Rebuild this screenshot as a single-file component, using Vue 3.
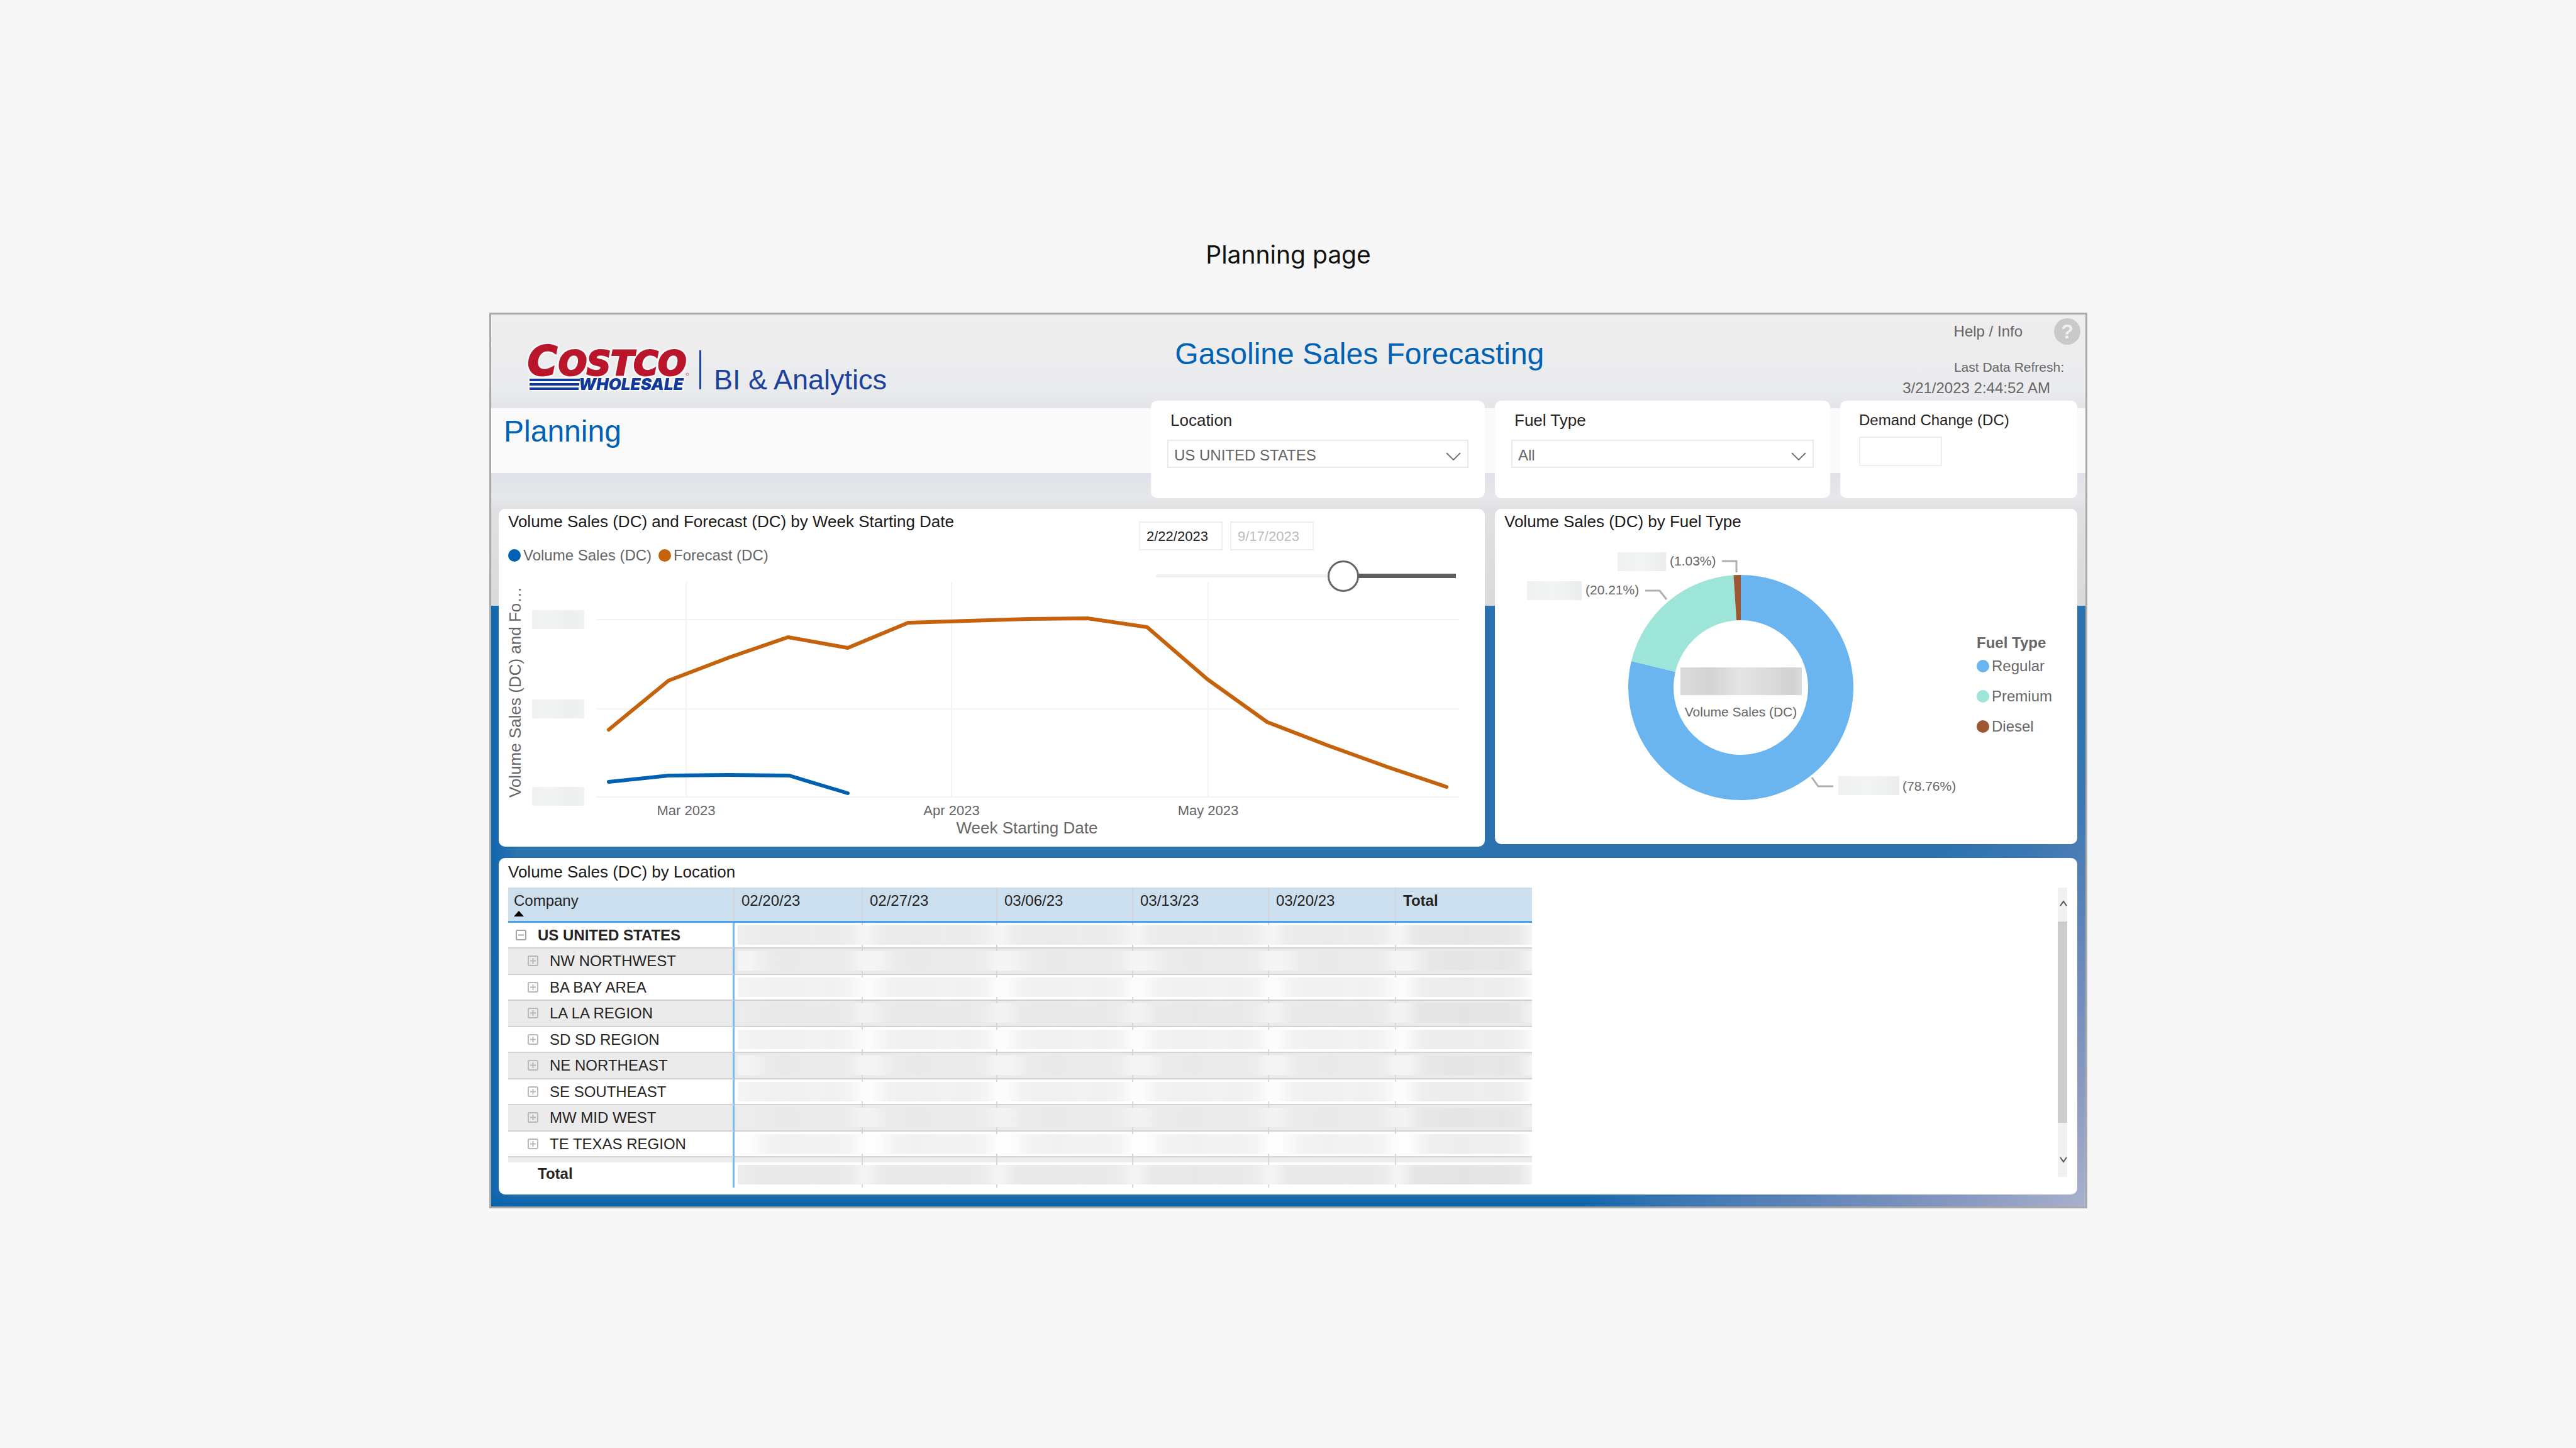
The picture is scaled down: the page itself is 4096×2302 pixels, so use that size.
<script setup>
import { ref } from 'vue'

const location = ref('US UNITED STATES')
const fuelType = ref('All')
const demandChange = ref('')
const startDate = ref('2/22/2023')
const endDate = ref('9/17/2023')
const rangeStart = ref(64)

const forecastPoints = [
  [175, 234], [270, 156], [367, 119], [460, 87], [555, 104], [651, 64],
  [843, 58], [936, 57], [1031, 71], [1127, 154], [1222, 222], [1318, 259],
  [1415, 294], [1507, 325],
]
const salesPoints = [[175, 317], [270, 307], [365, 306], [462, 307], [555, 335]]
const toPoints = (list) => list.map((p) => p.join(',')).join(' ')

const monthTicks = [
  { x: 298, label: 'Mar 2023' },
  { x: 720, label: 'Apr 2023' },
  { x: 1128, label: 'May 2023' },
]
const valueTicks = [59, 201, 341]
const maskedTicks = [44, 186, 325]

const fuels = [
  { name: 'Regular', share: 0.7876, color: '#6ab4f0' },
  { name: 'Premium', share: 0.2021, color: '#9de4d9' },
  { name: 'Diesel', share: 0.0103, color: '#9c5733' },
]
const cx = 391
const cy = 247
const outer = 179
const inner = 107
let turned = 0
const slices = fuels.map((fuel) => {
  const a = turned * 2 * Math.PI
  turned += fuel.share
  const b = turned * 2 * Math.PI
  const at = (r, t) => `${cx + r * Math.sin(t)} ${cy - r * Math.cos(t)}`
  const large = fuel.share > 0.5 ? 1 : 0
  return {
    ...fuel,
    d: `M${at(outer, a)}A${outer} ${outer} 0 ${large} 1 ${at(outer, b)}L${at(inner, b)}A${inner} ${inner} 0 ${large} 0 ${at(inner, a)}Z`,
  }
})
const shareLabels = [
  { text: '(1.03%)', x: 278, y: 53, box: [195, 32, 77], line: '361,46 384,46 384,64' },
  { text: '(20.21%)', x: 144, y: 99, box: [51, 78, 87], line: '239,93 262,93 273,107' },
  { text: '(78.76%)', x: 648, y: 411, box: [546, 388, 97], line: '504,390 514,404 538,404' },
]

const weeks = ['02/20/23', '02/27/23', '03/06/23', '03/13/23', '03/20/23']
const regions = [
  { name: 'US UNITED STATES', top: true, fade: 6, edge: 245, tone: 235 },
  { name: 'NW NORTHWEST', fade: 18, edge: 245, tone: 234 },
  { name: 'BA BAY AREA', fade: 12, edge: 251, tone: 241 },
  { name: 'LA LA REGION', fade: 10, edge: 243, tone: 233 },
  { name: 'SD SD REGION', fade: 12, edge: 251, tone: 241 },
  { name: 'NE NORTHEAST', fade: 16, edge: 245, tone: 234 },
  { name: 'SE SOUTHEAST', fade: 12, edge: 252, tone: 241 },
  { name: 'MW MID WEST', fade: 12, edge: 243, tone: 234 },
  { name: 'TE TEXAS REGION', fade: 18, edge: 253, tone: 242 },
]
const totals = { fade: 6, edge: 244, tone: 233 }

function masked(row, col) {
  const g = (v) => `rgb(${v},${v},${v})`
  const body = row.tone - (col === 6 ? 4 : 0)
  const start = col === 1 && row.fade < 15 ? g(body + 3) : g(row.edge)
  return {
    backgroundImage: `linear-gradient(90deg, ${start} ${row.fade / 2}%, ${g(body + 1)} ${row.fade + 8}%, ${g(body - 1)} ${34 + col * 3}%, ${g(body + 1)} 60%, ${g(body)} 78%, ${g(body + 3)} 90%, ${g(row.edge)} 100%)`,
  }
}
</script>

<template>
  <main class="page">
    <h1 class="page-title">Planning page</h1>

    <section class="report">
      <header class="top">
        <div class="brand">
          <svg class="logo" viewBox="0 0 280 81" role="img" aria-label="Costco Wholesale">
            <g class="wordmark">
              <text x="3" y="51" class="red big">C</text>
              <text x="52" y="51" class="red">OSTCO</text>
              <rect x="6" y="57" width="80" height="4" class="bar" />
              <rect x="6" y="64" width="79" height="4" class="bar" />
              <rect x="6" y="71" width="78" height="4" class="bar" />
              <text x="84" y="75" class="blue">WHOLESALE</text>
            </g>
            <circle cx="257" cy="50" r="2" fill="none" stroke="#d0707c" />
          </svg>
          <span class="brand-rule"></span>
          <span class="brand-text">BI &amp; Analytics</span>
        </div>
        <h2 class="report-title">Gasoline Sales Forecasting</h2>
        <div class="meta">
          <div class="help">
            <a href="#help">Help / Info</a>
            <button type="button" class="help-icon" aria-label="Help">?</button>
          </div>
          <p class="refresh-label">Last Data Refresh:</p>
          <p class="refresh-time">3/21/2023 2:44:52 AM</p>
        </div>
      </header>

      <div class="filters">
        <h3 class="section-title">Planning</h3>
        <div class="card">
          <label for="location">Location</label>
          <div class="select">
            <select id="location" v-model="location">
              <option>US UNITED STATES</option>
            </select>
            <svg viewBox="0 0 24 13" class="chevron"><path d="M1 1 L12 12 L23 1" /></svg>
          </div>
        </div>
        <div class="card">
          <label for="fuel">Fuel Type</label>
          <div class="select">
            <select id="fuel" v-model="fuelType">
              <option>All</option>
            </select>
            <svg viewBox="0 0 24 13" class="chevron"><path d="M1 1 L12 12 L23 1" /></svg>
          </div>
        </div>
        <div class="card demand">
          <label for="demand">Demand Change (DC)</label>
          <input id="demand" v-model="demandChange" type="text" />
        </div>
      </div>

      <div class="charts">
        <section class="panel trend">
          <div class="trend-head">
            <div>
              <h3 class="panel-title">Volume Sales (DC) and Forecast (DC) by Week Starting Date</h3>
              <ul class="series">
                <li><i class="dot sales"></i>Volume Sales (DC)</li>
                <li><i class="dot forecast"></i>Forecast (DC)</li>
              </ul>
            </div>
            <div class="slicer">
              <div class="dates">
                <input v-model="startDate" type="text" aria-label="Start date" />
                <input v-model="endDate" type="text" aria-label="End date" class="muted" />
              </div>
              <input v-model="rangeStart" type="range" min="0" max="100" aria-label="Date range" class="range" />
            </div>
          </div>
          <svg class="plot" viewBox="0 0 1568 420">
            <defs>
              <linearGradient id="mask-soft">
                <stop offset="0" stop-color="#f0f1f1" />
                <stop offset="0.35" stop-color="#f2f3f3" />
                <stop offset="0.7" stop-color="#edefef" />
                <stop offset="1" stop-color="#f0f2f2" />
              </linearGradient>
            </defs>
            <g class="grid">
              <path v-for="y in valueTicks" :key="'h' + y" :d="`M155 ${y}H1527`" />
              <path v-for="t in monthTicks" :key="t.x" :d="`M${t.x} 0V341`" />
            </g>
            <rect v-for="y in maskedTicks" :key="'m' + y" x="53" :y="y" width="83" height="30" fill="url(#mask-soft)" />
            <polyline class="line forecast-line" :points="toPoints(forecastPoints)" />
            <polyline class="line sales-line" :points="toPoints(salesPoints)" />
            <text v-for="t in monthTicks" :key="t.label" class="tick" :x="t.x" y="370">{{ t.label }}</text>
            <text class="axis" x="840" y="399" text-anchor="middle">Week Starting Date</text>
            <text class="axis" transform="translate(35 342) rotate(-90)">Volume Sales (DC) and Fo…</text>
          </svg>
        </section>

        <section class="panel fuel">
          <h3 class="panel-title">Volume Sales (DC) by Fuel Type</h3>
          <div class="fuel-body">
            <svg class="donut" viewBox="0 0 752 496">
              <defs>
                <linearGradient id="mask-strong">
                  <stop offset="0" stop-color="#dcdbdb" />
                  <stop offset="0.25" stop-color="#d4d4d4" />
                  <stop offset="0.5" stop-color="#e4e4e5" />
                  <stop offset="0.75" stop-color="#dadada" />
                  <stop offset="0.92" stop-color="#d2d2d2" />
                  <stop offset="1" stop-color="#dadada" />
                </linearGradient>
                <linearGradient id="mask-label">
                  <stop offset="0" stop-color="#eff0f0" />
                  <stop offset="0.5" stop-color="#f3f4f4" />
                  <stop offset="1" stop-color="#ebeded" />
                </linearGradient>
              </defs>
              <path v-for="s in slices" :key="s.name" :d="s.d" :fill="s.color" />
              <g v-for="l in shareLabels" :key="l.text">
                <rect :x="l.box[0]" :y="l.box[1]" :width="l.box[2]" height="30" fill="url(#mask-label)" />
                <polyline class="leader" :points="l.line" />
                <text class="share" :x="l.x" :y="l.y">{{ l.text }}</text>
              </g>
              <rect x="295" y="215" width="193" height="44" fill="url(#mask-strong)" />
              <text class="share" x="391" y="293" text-anchor="middle">Volume Sales (DC)</text>
            </svg>
            <div class="fuel-legend">
              <h4>Fuel Type</h4>
              <ul>
                <li v-for="f in fuels" :key="f.name">
                  <i class="dot" :style="{ background: f.color }"></i>{{ f.name }}
                </li>
              </ul>
            </div>
          </div>
        </section>
      </div>

      <section class="panel locations">
        <h3 class="panel-title">Volume Sales (DC) by Location</h3>
        <div class="table-area">
          <table>
            <colgroup>
              <col class="c-name" /><col class="c-1" /><col class="c-2" /><col class="c-3" />
              <col class="c-3" /><col class="c-5" /><col class="c-3" />
            </colgroup>
            <thead>
              <tr>
                <th scope="col" class="first">
                  Company
                  <svg viewBox="0 0 16 9" class="sort"><path d="M8 0 L16 9 H0 Z" /></svg>
                </th>
                <th v-for="w in weeks" :key="w" scope="col">{{ w }}</th>
                <th scope="col" class="strong">Total</th>
              </tr>
            </thead>
            <tbody>
              <tr v-for="r in regions" :key="r.name">
                <th scope="row">
                  <div class="name" :class="{ child: !r.top, strong: r.top }">
                    <button type="button" :aria-label="(r.top ? 'Collapse ' : 'Expand ') + r.name">
                      <svg viewBox="0 0 17 17">
                        <rect x="1" y="1" width="15" height="15" rx="2" />
                        <path :d="r.top ? 'M4 8.5H13' : 'M4 8.5H13M8.5 4V13'" />
                      </svg>
                    </button>
                    {{ r.name }}
                  </div>
                </th>
                <td v-for="c in 6" :key="c"><div class="masked" :style="masked(r, c)"></div></td>
              </tr>
            </tbody>
            <tfoot>
              <tr class="spacer"><th></th><td v-for="c in 6" :key="c"></td></tr>
              <tr>
                <th scope="row"><div class="name total strong">Total</div></th>
                <td v-for="c in 6" :key="c"><div class="masked" :style="masked(totals, c)"></div></td>
              </tr>
            </tfoot>
          </table>
          <div class="scroll">
            <button type="button" aria-label="Scroll up">
              <svg viewBox="0 0 12 10"><path d="M1 9 L6 2 L11 9" /></svg>
            </button>
            <div class="thumb"></div>
            <button type="button" aria-label="Scroll down" class="down">
              <svg viewBox="0 0 12 10"><path d="M1 1 L6 8 L11 1" /></svg>
            </button>
          </div>
        </div>
      </section>
    </section>
  </main>
</template>

<style>
html,
body {
  margin: 0;
  background: #f7f7f7;
}
</style>

<style scoped>
* {
  box-sizing: border-box;
}
h1, h2, h3, h4, p, ul {
  margin: 0;
  padding: 0;
  font-weight: 400;
}
ul {
  list-style: none;
}
button, input, select {
  font-family: inherit;
  margin: 0;
  border-radius: 0;
}
.page {
  min-height: 100vh;
  padding: 381px 777px 0 778px;
  background: #f7f7f7;
  font-family: "Liberation Sans", Arial, sans-serif;
  color: #252423;
}
.page-title {
  font-family: Inter, sans-serif;
  font-size: 39px;
  line-height: 48px;
  text-align: center;
  color: #111;
  margin-bottom: 68px;
}
.report {
  border: 3px solid #a9a9a9;
  padding: 0 13px 19px 12px;
  background:
    linear-gradient(#eeeeee 0, #ededee 40px, #eaebed 120px, #e3e5e9 149px, #fafafa 149px, #fafafa 252px, #e1e2e8 252px, #e5e7ea 290px, #dfe0e2 312px, #dadadc 463px, transparent 463px),
    linear-gradient(90deg, rgba(6, 98, 174, 0.7) 0, rgba(6, 98, 174, 0) 40px),
    linear-gradient(135deg, transparent 77%, #3b77b2 81%, #5f84b8 87%, #8898c0 94%, #a9b0cd 100%) 0 463px / 100% calc(100% - 463px) no-repeat,
    linear-gradient(#2b72ae 463px, #2b72ae 900px, #246fae 1395px, #0b62ab 100%);
}
.top {
  display: grid;
  grid-template-columns: 43% 1fr auto;
  height: 137px;
}
.brand {
  display: flex;
  align-items: flex-end;
  align-self: start;
  padding: 45px 0 0 43px;
}
.logo {
  width: 280px;
  height: 81px;
  overflow: visible;
}
.wordmark {
  font-weight: 900;
  font-style: italic;
  filter: drop-shadow(2px 0 0 #fafafa) drop-shadow(-2px 0 0 #fafafa) drop-shadow(0 2px 0 #fafafa) drop-shadow(0 -2px 0 #fafafa);
}
.red {
  font-family: "DejaVu Sans", sans-serif;
  font-size: 53px;
  fill: #b9152b;
  stroke: #b9152b;
  stroke-width: 3px;
}
.big {
  font-size: 64px;
}
.blue {
  font-family: Inter, sans-serif;
  font-size: 26px;
  fill: #10399b;
}
.bar {
  fill: #10399b;
}
.brand-rule {
  width: 3px;
  height: 62px;
  margin: 0 20px 7px -4px;
  background: #1c429e;
}
.brand-text {
  font-size: 45px;
  line-height: 45px;
  color: #1c429e;
  white-space: nowrap;
}
.report-title {
  padding-top: 35px;
  margin-left: -4px;
  font-size: 48px;
  line-height: 56px;
  color: #0062b4;
  white-space: nowrap;
}
.meta {
  padding-top: 6px;
  text-align: right;
  color: #666;
}
.help {
  display: flex;
  justify-content: flex-end;
  align-items: center;
  gap: 50px;
  margin: 0 -5px 22px 0;
}
.help a {
  font-size: 24px;
  line-height: 40px;
  color: #666;
  text-decoration: none;
}
.help-icon {
  width: 42px;
  height: 42px;
  padding: 0;
  border: 0;
  border-radius: 50%;
  background: #c9c9c9;
  color: #efefef;
  font-size: 32px;
  font-weight: 700;
  line-height: 42px;
}
.refresh-label {
  padding-right: 21px;
  font-size: 21px;
  line-height: 28px;
  margin-bottom: 3px;
}
.refresh-time {
  padding-right: 43px;
  font-size: 24px;
  line-height: 32px;
}
.filters {
  display: grid;
  grid-template-columns: 1021fr 531fr 533fr 377fr;
  gap: 16px;
  margin-bottom: 17px;
}
.section-title {
  padding: 21px 0 0 8px;
  font-size: 48px;
  line-height: 56px;
  color: #0062b4;
}
.card {
  min-height: 155px;
  padding: 15px 26px;
  border-radius: 10px;
  background: #fff;
}
.card label {
  display: block;
  margin: 0 0 15px 5px;
  font-size: 26px;
  line-height: 32px;
}
.select {
  position: relative;
}
.select select {
  display: block;
  width: 100%;
  height: 45px;
  padding: 3px 0 0 9px;
  border: 2px solid #ebebeb;
  background: #fff;
  appearance: none;
  font-size: 24px;
  color: #666;
}
.chevron {
  position: absolute;
  right: 12px;
  top: 20px;
  width: 24px;
  height: 13px;
  fill: none;
  stroke: #777;
  stroke-width: 2px;
  pointer-events: none;
}
.demand {
  padding-left: 30px;
}
.demand label {
  margin: 0 0 10px;
  font-size: 24px;
}
.demand input {
  display: block;
  width: 132px;
  height: 47px;
  border: 2px solid #eeeeee;
  background: #fff;
}
.charts {
  display: grid;
  grid-template-columns: 1568fr 926fr;
  align-items: start;
  gap: 16px;
  margin-bottom: 18px;
}
.panel {
  min-width: 0;
  border-radius: 10px;
  background: #fff;
}
.panel-title {
  font-size: 26px;
  line-height: 32px;
  color: #1a1a1a;
  white-space: nowrap;
}
.trend-head {
  display: flex;
  justify-content: space-between;
  height: 117px;
  padding: 4px 46px 0 15px;
}
.series {
  display: flex;
  gap: 11px;
  margin-top: 22px;
}
.series li,
.fuel-legend li {
  display: flex;
  align-items: center;
  gap: 4px;
  font-size: 24px;
  line-height: 32px;
  color: #666;
}
.dot {
  width: 20px;
  height: 20px;
  border-radius: 50%;
}
.sales {
  background: #0061b3;
}
.forecast {
  background: #c5620c;
}
.slicer {
  width: 504px;
  padding-top: 16px;
}
.dates {
  display: flex;
  gap: 12px;
  margin-bottom: 14px;
}
.dates input {
  width: 133px;
  height: 46px;
  padding: 2px 0 0 10px;
  border: 2px solid #efefef;
  background: #fff;
  font-size: 22px;
  color: #252423;
}
.dates .muted {
  color: #bdbdbd;
}
.range {
  display: block;
  width: 477px;
  height: 52px;
  margin-left: 27px;
  appearance: none;
  background: transparent;
}
.range::-webkit-slider-runnable-track {
  height: 7px;
  background:
    linear-gradient(#f2f2f2, #f2f2f2) left center / 62% 5px no-repeat,
    linear-gradient(#605e5c, #605e5c) right center / 38% 7px no-repeat;
}
.range::-webkit-slider-thumb {
  appearance: none;
  width: 50px;
  height: 50px;
  margin-top: -21px;
  border: 3px solid #666;
  border-radius: 50%;
  background: #fff;
}
.plot,
.donut {
  display: block;
  width: 100%;
}
.grid path {
  stroke: #f3f3f3;
  stroke-width: 2px;
}
.line {
  fill: none;
  stroke-width: 6px;
  stroke-linejoin: round;
  stroke-linecap: round;
}
.forecast-line {
  stroke: #c5620c;
}
.sales-line {
  stroke: #0061b3;
}
.tick {
  font-size: 22px;
  text-anchor: middle;
  fill: #666;
}
.axis {
  font-size: 26px;
  fill: #666;
}
.fuel {
  padding-top: 4px;
}
.fuel .panel-title {
  padding-left: 15px;
}
.fuel-body {
  display: grid;
  grid-template-columns: 752fr 174fr;
  padding-top: 1px;
}
.share {
  font-size: 21px;
  fill: #666;
}
.leader {
  fill: none;
  stroke: #b0b0b0;
  stroke-width: 3px;
}
.fuel-legend {
  padding: 160px 0 0 14px;
}
.fuel-legend h4 {
  margin-bottom: 5px;
  font-size: 24px;
  font-weight: 700;
  line-height: 32px;
  color: #666;
}
.fuel-legend ul {
  display: grid;
  gap: 16px;
}
.locations {
  min-height: 535px;
  padding: 6px 16px 0 15px;
}
.table-area {
  display: flex;
  justify-content: space-between;
  margin-top: 9px;
}
table {
  table-layout: fixed;
  width: 1628px;
  border-collapse: separate;
  border-spacing: 0;
  font-size: 24px;
  line-height: 32px;
}
.c-name { width: 360px; }
.c-1 { width: 204px; }
.c-2 { width: 214px; }
.c-3 { width: 216px; }
.c-5 { width: 202px; }
th,
td {
  padding: 0;
  text-align: left;
  vertical-align: top;
  font-weight: 400;
}
thead th {
  height: 56px;
  padding: 5px 0 0 11px;
  border-bottom: 3px solid #46a0f5;
  background: linear-gradient(#d2d6da, #d2d6da) right top / 2px 100% no-repeat #ccdfee;
}
thead th:last-child {
  background: #ccdfee;
}
thead .first {
  padding-left: 9px;
}
.strong {
  font-weight: 700;
}
.sort {
  display: block;
  width: 16px;
  height: 9px;
}
tbody th,
tbody td {
  height: 41px;
  border-bottom: 2px solid #d2d2d2;
}
tbody tr:nth-child(even) > * {
  height: 42px;
  background-color: #ebebeb;
}
tbody th,
tfoot th {
  border-right: 3px solid #74b8fa;
}
tbody td,
tfoot td {
  background-image: linear-gradient(#d9d9d9, #d9d9d9);
  background-position: right top;
  background-size: 2px 100%;
  background-repeat: no-repeat;
}
tbody td:last-child,
tfoot td:last-child {
  background-image: none;
}
.name {
  display: flex;
  align-items: center;
  gap: 18px;
  padding: 4px 0 0 12px;
  line-height: 32px;
  white-space: nowrap;
}
.name.child {
  padding-left: 31px;
}
.name.total {
  padding: 2px 0 0 47px;
}
.name button {
  display: flex;
  width: 17px;
  height: 17px;
  margin-bottom: 2px;
  padding: 0;
  border: 0;
  background: none;
}
.name svg {
  width: 17px;
  height: 17px;
  fill: none;
  stroke: #a6a6a6;
  stroke-width: 2px;
}
.name.child svg {
  stroke: #b8b8b8;
}
.masked {
  height: 31px;
  margin-top: 4px;
}
th + td .masked {
  margin-left: 5px;
}
.spacer > * {
  height: 8px;
  background-color: #ececec;
}
tfoot tr:last-child > * {
  height: 40px;
}
.scroll {
  display: flex;
  flex-direction: column;
  width: 15px;
  height: 460px;
  background: #f1f1f1;
}
.scroll button {
  display: flex;
  justify-content: flex-end;
  height: 54px;
  padding: 20px 0 0;
  border: 0;
  background: none;
}
.scroll .down {
  margin-top: auto;
  padding-top: 22px;
}
.scroll svg {
  width: 12px;
  height: 10px;
  fill: none;
  stroke: #555;
  stroke-width: 2px;
}
.thumb {
  height: 320px;
  background: #cdcdcd;
}
</style>
